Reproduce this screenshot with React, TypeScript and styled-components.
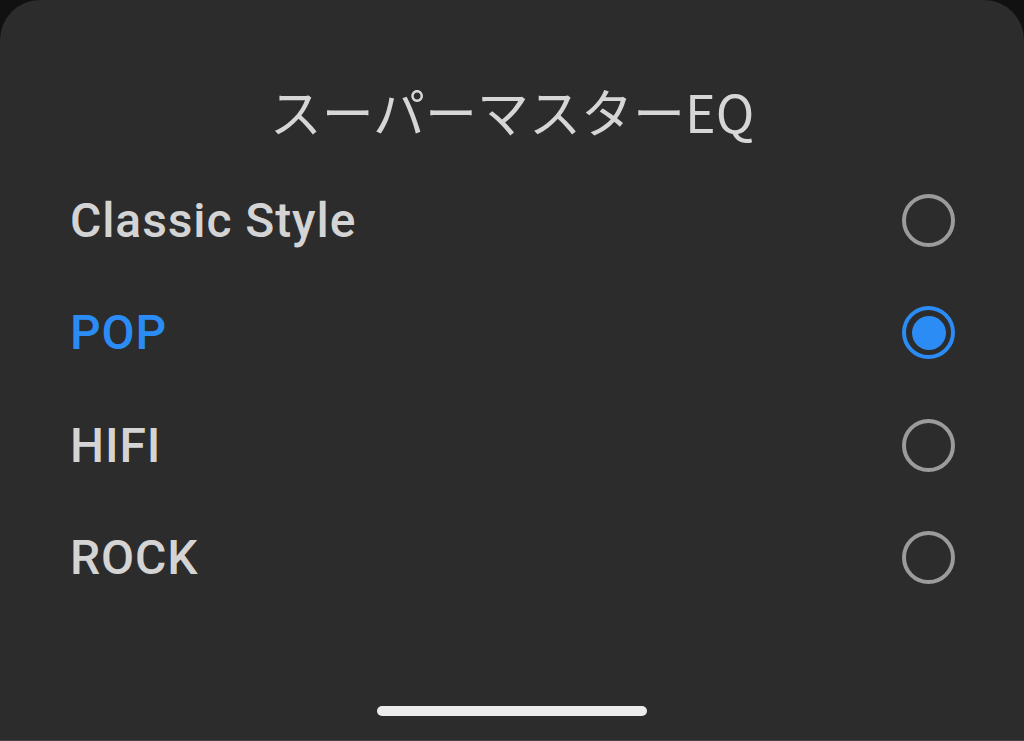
import { useState } from "react";
import styled, { createGlobalStyle } from "styled-components";

const GlobalStyle = createGlobalStyle`
  html, body {
    margin: 0;
    padding: 0;
    background: #111111;
  }
  #root {
    height: 741px;
  }
`;

const presets = ["Classic Style", "POP", "HIFI", "ROCK"];

const App = () => {
  const [selected, setSelected] = useState("POP");

  return (
    <>
      <GlobalStyle />
      <Sheet>
        <Title>スーパーマスターEQ</Title>
        <List>
          {presets.map((name) => (
            <Row key={name} onClick={() => setSelected(name)}>
              <Label $active={selected === name}>{name}</Label>
              <Radio $active={selected === name} />
            </Row>
          ))}
        </List>
        <HomeBar />
      </Sheet>
    </>
  );
};

const Sheet = styled.div`
  display: flex;
  flex-direction: column;
  height: 741px;
  box-sizing: border-box;
  background: #2c2c2c;
  border-radius: 40px 40px 0 0;
  border-bottom: 1px solid #454545;
`;

const Title = styled.h1`
  margin: 0;
  height: 108px;
  margin-top: 56px;
  display: flex;
  align-items: center;
  justify-content: center;
  font-family: "Noto Sans CJK JP", "Noto Sans", sans-serif;
  font-weight: 400;
  font-size: 52px;
  color: #d6d6d6;
`;

const List = styled.div`
  display: flex;
  flex-direction: column;
`;

const Row = styled.div`
  display: flex;
  align-items: center;
  justify-content: space-between;
  height: 112.5px;
  padding: 0 69px 0 70px;
  cursor: pointer;
`;

const Label = styled.span<{ $active: boolean }>`
  font-family: Roboto, "Liberation Sans", sans-serif;
  font-size: 48px;
  font-weight: 500;
  letter-spacing: 0.9px;
  color: ${(p) => (p.$active ? "#2a8cf4" : "#d4d4d4")};
`;

const Radio = styled.span<{ $active: boolean }>`
  position: relative;
  width: 53px;
  height: 53px;
  box-sizing: border-box;
  border-radius: 50%;
  border: 4.5px solid ${(p) => (p.$active ? "#2a8cf4" : "#9b9b9b")};

  &::after {
    content: "";
    display: ${(p) => (p.$active ? "block" : "none")};
    position: absolute;
    inset: 5.5px;
    border-radius: 50%;
    background: #2a8cf4;
  }
`;

const HomeBar = styled.div`
  margin: auto auto 24px;
  width: 270px;
  height: 10px;
  border-radius: 5px;
  background: #ececec;
`;

export default App;
